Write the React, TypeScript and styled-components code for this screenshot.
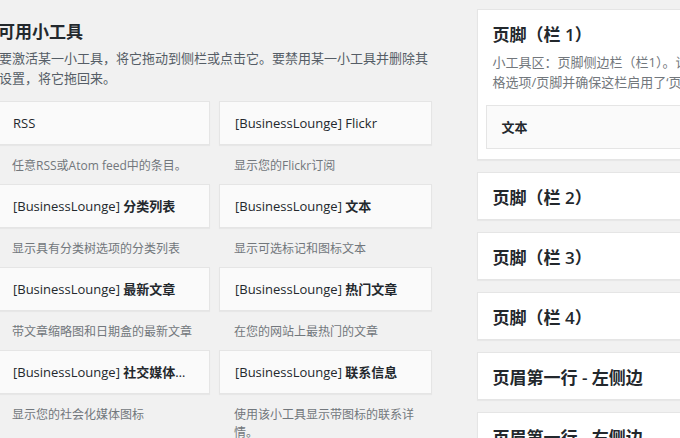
import React from 'react';
import styled, { createGlobalStyle } from 'styled-components';

const GlobalStyle = createGlobalStyle`
  html, body {
    margin: 0;
    padding: 0;
    background: #f1f1f1;
    overflow: hidden;
  }
  body {
    font-family: "Open Sans", "Noto Sans CJK SC", sans-serif;
    color: #23282d;
  }
`;

const widgets = [
    { prefix: '', name: 'RSS', bold: false, desc: '任意RSS或Atom feed中的条目。' },
    { prefix: '[BusinessLounge] ', name: 'Flickr', bold: false, desc: '显示您的Flickr订阅' },
    { prefix: '[BusinessLounge] ', name: '分类列表', bold: true, desc: '显示具有分类树选项的分类列表' },
    { prefix: '[BusinessLounge] ', name: '文本', bold: true, desc: '显示可选标记和图标文本' },
    { prefix: '[BusinessLounge] ', name: '最新文章', bold: true, desc: '带文章缩略图和日期盒的最新文章' },
    { prefix: '[BusinessLounge] ', name: '热门文章', bold: true, desc: '在您的网站上最热门的文章' },
    { prefix: '[BusinessLounge] ', name: '社交媒体图标', bold: true, desc: '显示您的社会化媒体图标' },
    { prefix: '[BusinessLounge] ', name: '联系信息', bold: true, desc: '使用该小工具显示带图标的联系详情。' },
];

const sidebars = ['页脚（栏 2）', '页脚（栏 3）', '页脚（栏 4）', '页眉第一行 - 左侧边', '页眉第一行 - 右侧边'];

const Page = styled.div`
  display: flex;
  align-items: flex-start;
  width: 1000px;
`;

const LeftColumn = styled.div`
  width: 435px;
  margin-left: -3px;
  padding-top: 21px;
  flex-shrink: 0;
`;

const Heading = styled.h2`
  margin: 0 0 6px 1px;
  font-size: 17px;
  line-height: 22px;
  font-weight: 600;
  color: #23282d;
`;

const Intro = styled.p`
  margin: 0 0 13px 2px;
  font-size: 13px;
  line-height: 19.5px;
  color: #555d66;
`;

const Grid = styled.div`
  display: grid;
  grid-template-columns: 213px 213px;
  column-gap: 9px;
`;

const Widget = styled.div`
  margin-bottom: 9px;
`;

const WidgetTop = styled.div`
  background: #fafafa;
  border: 1px solid #e5e5e5;
  box-shadow: 0 1px 1px rgba(0, 0, 0, 0.04);
`;

const WidgetTitle = styled.h3`
  margin: 0;
  padding: 13px 15px;
  font-size: 13px;
  line-height: 16px;
  font-weight: 400;
  color: #23282d;
  white-space: nowrap;
  overflow: hidden;
  text-overflow: ellipsis;
`;

const Strong = styled.span<{ $bold: boolean }>`
  font-weight: ${p => (p.$bold ? 700 : 400)};
`;

const WidgetDesc = styled.div`
  padding: 12px 15px 0;
  font-size: 12px;
  line-height: 18px;
  color: #72777c;
`;

const RightColumn = styled.div`
  margin-left: 44.5px;
  width: 330px;
  padding-top: 9px;
  display: flex;
  flex-direction: column;
  gap: 12px;
  flex-shrink: 0;
`;

const Panel = styled.div`
  background: #fff;
  border: 1px solid #e5e5e5;
  box-shadow: 0 1px 1px rgba(0, 0, 0, 0.04);
`;

const PanelTitle = styled.h2<{ $open?: boolean }>`
  margin: 0;
  padding: 16px 15px ${p => (p.$open ? '8px' : '12px')};
  font-size: 17px;
  line-height: 18px;
  font-weight: 600;
  color: #23282d;
  white-space: nowrap;
`;

const PanelDesc = styled.p`
  margin: 0;
  padding: 0 15px;
  font-size: 13px;
  line-height: 20px;
  color: #72777c;
  white-space: nowrap;
`;

const PanelBody = styled.div`
  padding: 13px 8px 10px;
`;

const InnerWidget = styled.div`
  background: #fafafa;
  border: 1px solid #e5e5e5;
  padding: 13px 15px;
  font-size: 13px;
  line-height: 16px;
  font-weight: 700;
  color: #23282d;
`;

export default function App() {
    return (
        <>
            <GlobalStyle />
            <Page>
                <LeftColumn>
                    <Heading>可用小工具</Heading>
                    <Intro>要激活某一小工具，将它拖动到侧栏或点击它。要禁用某一小工具并删除其设置，将它拖回来。</Intro>
                    <Grid>
                        {widgets.map((w) => (
                            <Widget key={w.prefix + w.name}>
                                <WidgetTop>
                                    <WidgetTitle>
                                        {w.prefix}
                                        <Strong $bold={w.bold}>{w.name}</Strong>
                                    </WidgetTitle>
                                </WidgetTop>
                                <WidgetDesc>{w.desc}</WidgetDesc>
                            </Widget>
                        ))}
                    </Grid>
                </LeftColumn>
                <RightColumn>
                    <Panel>
                        <PanelTitle $open>页脚（栏 1）</PanelTitle>
                        <PanelDesc>
                            小工具区：页脚侧边栏（栏1）。请前往外观/自定义/主题风
                            <br />
                            格选项/页脚并确保这栏启用了‘页脚小工具’。
                        </PanelDesc>
                        <PanelBody>
                            <InnerWidget>文本</InnerWidget>
                        </PanelBody>
                    </Panel>
                    {sidebars.map((name) => (
                        <Panel key={name}>
                            <PanelTitle>{name}</PanelTitle>
                        </Panel>
                    ))}
                </RightColumn>
            </Page>
        </>
    );
}
